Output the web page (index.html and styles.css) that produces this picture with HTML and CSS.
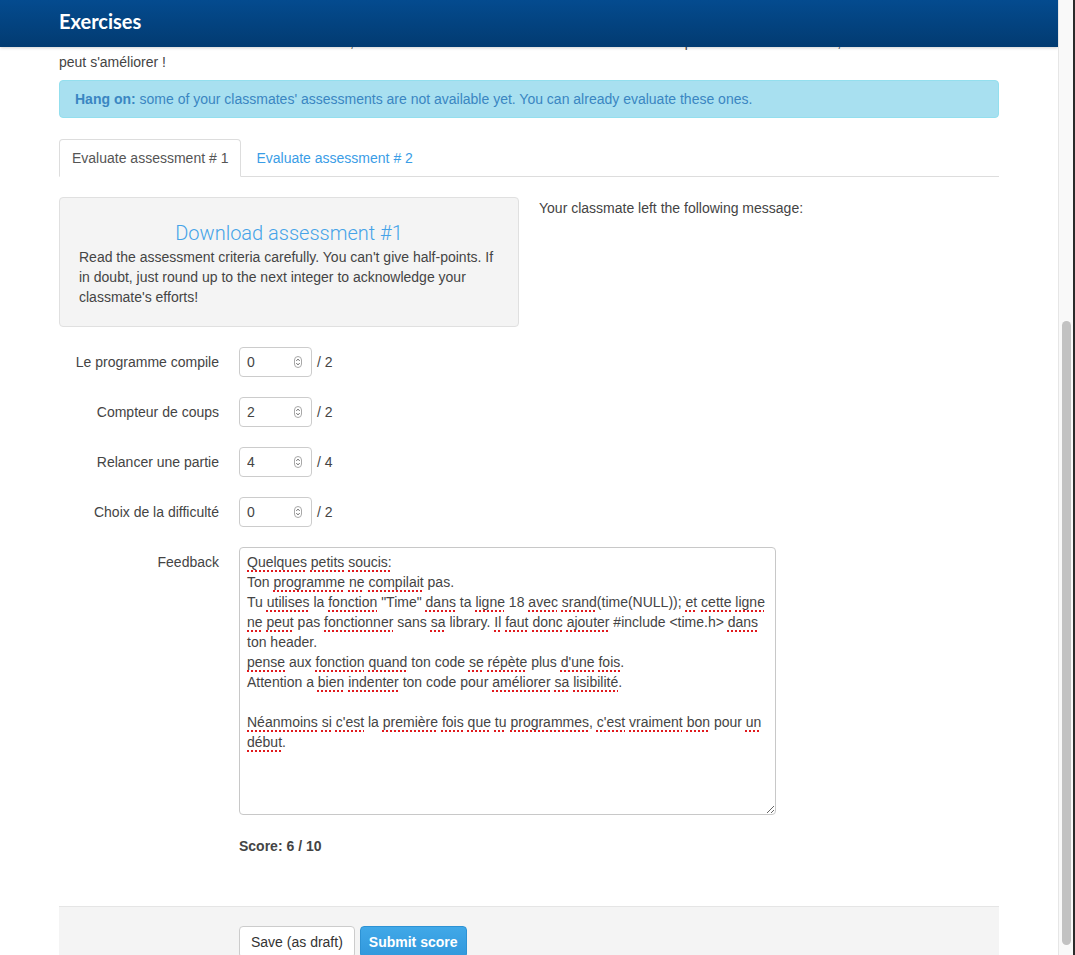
FILE: index.html
```html
<!DOCTYPE html>
<html lang="fr">
<head>
<meta charset="utf-8">
<title>Exercises</title>
<link rel="stylesheet" href="styles.css">
</head>
<body>
<div class="viewport">
  <header class="topbar">
    <div class="topbar-inner"><h1 class="brand">Exercises</h1></div>
  </header>
  <main class="container">
    <p class="intro">Le travail rendu est correct dans son ensemble, même si la structure du code reste à revoir et il manque encore des éléments, ton travail<br>peut s'améliorer !</p>

    <div class="alert"><strong>Hang on:</strong> some of your classmates' assessments are not available yet. You can already evaluate these ones.</div>

    <ul class="tabs">
      <li class="tab active"><a href="#">Evaluate assessment # 1</a></li>
      <li class="tab"><a href="#">Evaluate assessment # 2</a></li>
    </ul>

    <div class="row">
      <div class="col">
        <div class="well">
          <h2 class="well-title"><a href="#">Download assessment #1</a></h2>
          <p class="well-text">Read the assessment criteria carefully. You can't give half-points. If in doubt, just round up to the next integer to acknowledge your classmate's efforts!</p>
        </div>
      </div>
      <div class="col">
        <p class="message">Your classmate left the following message:</p>
      </div>
    </div>

    <form class="form">
      <div class="group">
        <label class="label">Le programme compile</label>
        <div class="controls">
          <div class="num"><input class="num-input" type="text" value="0"><svg class="spin" width="8" height="12" viewBox="0 0 8 12"><rect x="0.5" y="0.5" width="7" height="11" rx="3.5" fill="#fff" stroke="#a8a8a8"/><path d="M2.4 4.8 L4 3.2 L5.6 4.8 M2.4 7.2 L4 8.8 L5.6 7.2" fill="none" stroke="#555" stroke-width="1"/></svg></div>
          <span class="max">/ 2</span>
        </div>
      </div>
      <div class="group">
        <label class="label">Compteur de coups</label>
        <div class="controls">
          <div class="num"><input class="num-input" type="text" value="2"><svg class="spin" width="8" height="12" viewBox="0 0 8 12"><rect x="0.5" y="0.5" width="7" height="11" rx="3.5" fill="#fff" stroke="#a8a8a8"/><path d="M2.4 4.8 L4 3.2 L5.6 4.8 M2.4 7.2 L4 8.8 L5.6 7.2" fill="none" stroke="#555" stroke-width="1"/></svg></div>
          <span class="max">/ 2</span>
        </div>
      </div>
      <div class="group">
        <label class="label">Relancer une partie</label>
        <div class="controls">
          <div class="num"><input class="num-input" type="text" value="4"><svg class="spin" width="8" height="12" viewBox="0 0 8 12"><rect x="0.5" y="0.5" width="7" height="11" rx="3.5" fill="#fff" stroke="#a8a8a8"/><path d="M2.4 4.8 L4 3.2 L5.6 4.8 M2.4 7.2 L4 8.8 L5.6 7.2" fill="none" stroke="#555" stroke-width="1"/></svg></div>
          <span class="max">/ 4</span>
        </div>
      </div>
      <div class="group">
        <label class="label">Choix de la difficulté</label>
        <div class="controls">
          <div class="num"><input class="num-input" type="text" value="0"><svg class="spin" width="8" height="12" viewBox="0 0 8 12"><rect x="0.5" y="0.5" width="7" height="11" rx="3.5" fill="#fff" stroke="#a8a8a8"/><path d="M2.4 4.8 L4 3.2 L5.6 4.8 M2.4 7.2 L4 8.8 L5.6 7.2" fill="none" stroke="#555" stroke-width="1"/></svg></div>
          <span class="max">/ 2</span>
        </div>
      </div>
      <div class="group">
        <label class="label">Feedback</label>
        <div class="controls">
          <div class="textarea"><span class="sp">Quelques</span> <span class="sp">petits</span> <span class="sp">soucis:</span><br>Ton <span class="sp">programme</span> <span class="sp">ne</span> <span class="sp">compilait</span> pas.<br>Tu <span class="sp">utilises</span> la <span class="sp">fonction</span> "Time" <span class="sp">dans</span> ta <span class="sp">ligne</span> 18 <span class="sp">avec</span> <span class="sp">srand</span>(time(NULL)); <span class="sp">et</span> <span class="sp">cette</span> <span class="sp">ligne</span><br><span class="sp">ne</span> <span class="sp">peut</span> pas <span class="sp">fonctionner</span> sans <span class="sp">sa</span> library. <span class="sp">Il</span> <span class="sp">faut</span> <span class="sp">donc</span> <span class="sp">ajouter</span> #include &lt;time.h&gt; <span class="sp">dans</span><br>ton header.<br><span class="sp">pense</span> aux <span class="sp">fonction</span> <span class="sp">quand</span> ton code <span class="sp">se</span> <span class="sp">répète</span> plus <span class="sp">d'une</span> <span class="sp">fois</span>.<br>Attention a <span class="sp">bien</span> <span class="sp">indenter</span> ton code pour <span class="sp">améliorer</span> <span class="sp">sa</span> <span class="sp">lisibilité</span>.<br><br><span class="sp">Néanmoins</span> <span class="sp">si</span> <span class="sp">c'est</span> la <span class="sp">première</span> <span class="sp">fois</span> <span class="sp">que</span> <span class="sp">tu</span> <span class="sp">programmes</span>, <span class="sp">c'est</span> <span class="sp">vraiment</span> <span class="sp">bon</span> pour <span class="sp">un</span><br><span class="sp">début</span>.</div>
        </div>
      </div>
      <div class="group score-group">
        <div class="label"></div>
        <div class="controls"><strong class="score">Score: 6 / 10</strong></div>
      </div>
      <div class="actions">
        <button type="button" class="btn">Save (as draft)</button>
        <button type="button" class="btn btn-primary">Submit score</button>
      </div>
    </form>
  </main>
</div>
<div class="scrollbar"><div class="thumb"></div></div>
</body>
</html>
```

FILE: styles.css
```css
* { box-sizing: border-box; }
html, body { margin: 0; padding: 0; }
body {
  height: 955px;
  overflow: hidden;
  display: flex;
  font-family: "Liberation Sans", Arial, sans-serif;
  font-size: 14px;
  line-height: 20px;
  color: #444;
  background: #fff;
}
.viewport {
  flex: 1;
  height: 955px;
  overflow: hidden;
}
.topbar {
  position: relative;
  z-index: 2;
  height: 47px;
  background: linear-gradient(#044b8f, #023b71);
  box-shadow: 0 1px 3px rgba(0,0,0,0.18);
}
.topbar-inner {
  width: 940px;
  margin: 0 auto;
  height: 47px;
  display: flex;
  align-items: center;
}
.brand {
  margin: 0;
  padding-bottom: 5px;
  font-family: Lato, "Liberation Sans", sans-serif;
  font-weight: 700;
  font-size: 20px;
  color: #fff;
}
.container {
  width: 940px;
  margin: 0 auto;
}
.intro {
  margin: -15px 0 8px;
}
.alert {
  background: #a8e0f0;
  border: 1px solid #93dfee;
  border-radius: 4px;
  color: #3a86c2;
  padding: 8px 35px 8px 15px;
  margin-bottom: 21px;
}
.alert strong { font-weight: 700; }

.tabs {
  list-style: none;
  margin: 0 0 20px;
  padding: 0;
  display: flex;
  border-bottom: 1px solid #ddd;
}
.tab {
  margin-right: 2px;
  margin-bottom: -1px;
}
.tab a {
  display: block;
  padding: 8px 12px;
  border: 1px solid transparent;
  border-radius: 4px 4px 0 0;
  text-decoration: none;
  color: #3a9de6;
  line-height: 20px;
}
.tab.active a {
  color: #555;
  background: #fff;
  border-color: #ddd #ddd transparent;
}

.row {
  display: flex;
  gap: 20px;
}
.col { width: 460px; }
.well {
  background: #f4f4f4;
  border: 1px solid #e0e0e0;
  border-radius: 4px;
  padding: 19px;
  min-height: 130px;
}
.well-title {
  margin: 0;
  padding-top: 2px;
  text-align: center;
  font-family: Roboto, "Liberation Sans", sans-serif;
  font-weight: 300;
  font-size: 20px;
  line-height: 28px;
}
.well-title a { color: #45a3e8; text-decoration: none; }
.well-text { margin: 0; color: #444; }
.message { margin: 0; padding-top: 1px; }

.form { margin-top: 20px; }
.group {
  display: flex;
  gap: 20px;
  margin-bottom: 20px;
}
.label {
  width: 160px;
  text-align: right;
  padding-top: 5px;
  flex-shrink: 0;
}
.controls {
  display: flex;
  align-items: center;
  align-self: flex-start;
  gap: 5px;
}
.num {
  width: 73px;
  height: 30px;
  border: 1px solid #ccc;
  border-radius: 4px;
  display: flex;
  align-items: center;
  padding: 0 9px 0 7px;
  background: #fff;
}
.num-input {
  width: 40px;
  flex: 1;
  border: 0;
  padding: 0;
  outline: none;
  font: inherit;
  color: #444;
  background: transparent;
}
.spin { display: block; flex-shrink: 0; }
.max { color: #444; }

.textarea {
  width: 537px;
  height: 268px;
  border: 1px solid #c8c8c8;
  border-radius: 4px;
  padding: 4px 7px;
  white-space: nowrap;
  overflow: auto;
  resize: both;
  color: #444;
  background: #fff;
}
.sp {
  text-decoration: underline dotted #e0191d;
  text-decoration-thickness: 2px;
  text-underline-offset: 3px;
}
.score-group { margin-bottom: 50px; }
.score { font-weight: 700; padding-top: 1px; }

.actions {
  background: #f4f4f4;
  border-top: 1px solid #e5e5e5;
  padding: 19px 20px 20px 180px;
  display: flex;
  gap: 5px;
}
.btn {
  font-family: "Liberation Sans", Arial, sans-serif;
  font-size: 14px;
  line-height: 20px;
  padding: 5px 11px;
  border: 1px solid #ccc;
  border-radius: 4px;
  background: #fff;
  color: #333;
}
.btn-primary {
  background: linear-gradient(#40a8e8, #3198dc);
  border-color: #2d92d4;
  color: #fff;
  font-weight: 700;
  padding: 5px 8px;
}

.scrollbar {
  width: 17px;
  height: 955px;
  flex-shrink: 0;
  background: #f9f9f9;
  border-left: 1px solid #e6e6e6;
  border-right: 2px solid #2b2b2b;
  padding: 321px 2px 10px 3px;
}
.thumb {
  width: 9px;
  height: 624px;
  border-radius: 5px;
  background: #c2c2c2;
}
```
